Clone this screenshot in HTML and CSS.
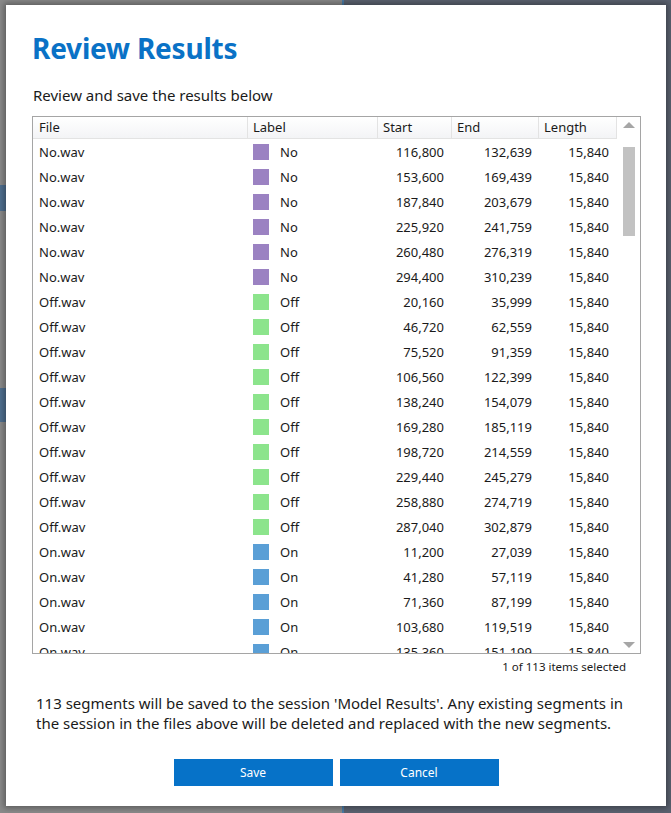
FILE: index.html
```html
<!DOCTYPE html>
<html>
<head>
<meta charset="utf-8">
<link rel="stylesheet" href="styles.css">
</head>
<body>
<div class="dialog">
  <h1 class="title">Review Results</h1>
  <p class="subtitle">Review and save the results below</p>
  <div class="grid-box">
    <div class="grid-main">
      <div class="row head">
        <div class="c c-file">File</div>
        <div class="c c-label">Label</div>
        <div class="c c-start">Start</div>
        <div class="c c-end">End</div>
        <div class="c c-len">Length</div>
      </div>
      <div class="body">
        <div class="row"><div class="c c-file">No.wav</div><div class="c c-label"><span class="sw no"></span>No</div><div class="c num c-start">116,800</div><div class="c num c-end">132,639</div><div class="c num c-len">15,840</div></div>
        <div class="row"><div class="c c-file">No.wav</div><div class="c c-label"><span class="sw no"></span>No</div><div class="c num c-start">153,600</div><div class="c num c-end">169,439</div><div class="c num c-len">15,840</div></div>
        <div class="row"><div class="c c-file">No.wav</div><div class="c c-label"><span class="sw no"></span>No</div><div class="c num c-start">187,840</div><div class="c num c-end">203,679</div><div class="c num c-len">15,840</div></div>
        <div class="row"><div class="c c-file">No.wav</div><div class="c c-label"><span class="sw no"></span>No</div><div class="c num c-start">225,920</div><div class="c num c-end">241,759</div><div class="c num c-len">15,840</div></div>
        <div class="row"><div class="c c-file">No.wav</div><div class="c c-label"><span class="sw no"></span>No</div><div class="c num c-start">260,480</div><div class="c num c-end">276,319</div><div class="c num c-len">15,840</div></div>
        <div class="row"><div class="c c-file">No.wav</div><div class="c c-label"><span class="sw no"></span>No</div><div class="c num c-start">294,400</div><div class="c num c-end">310,239</div><div class="c num c-len">15,840</div></div>
        <div class="row"><div class="c c-file">Off.wav</div><div class="c c-label"><span class="sw off"></span>Off</div><div class="c num c-start">20,160</div><div class="c num c-end">35,999</div><div class="c num c-len">15,840</div></div>
        <div class="row"><div class="c c-file">Off.wav</div><div class="c c-label"><span class="sw off"></span>Off</div><div class="c num c-start">46,720</div><div class="c num c-end">62,559</div><div class="c num c-len">15,840</div></div>
        <div class="row"><div class="c c-file">Off.wav</div><div class="c c-label"><span class="sw off"></span>Off</div><div class="c num c-start">75,520</div><div class="c num c-end">91,359</div><div class="c num c-len">15,840</div></div>
        <div class="row"><div class="c c-file">Off.wav</div><div class="c c-label"><span class="sw off"></span>Off</div><div class="c num c-start">106,560</div><div class="c num c-end">122,399</div><div class="c num c-len">15,840</div></div>
        <div class="row"><div class="c c-file">Off.wav</div><div class="c c-label"><span class="sw off"></span>Off</div><div class="c num c-start">138,240</div><div class="c num c-end">154,079</div><div class="c num c-len">15,840</div></div>
        <div class="row"><div class="c c-file">Off.wav</div><div class="c c-label"><span class="sw off"></span>Off</div><div class="c num c-start">169,280</div><div class="c num c-end">185,119</div><div class="c num c-len">15,840</div></div>
        <div class="row"><div class="c c-file">Off.wav</div><div class="c c-label"><span class="sw off"></span>Off</div><div class="c num c-start">198,720</div><div class="c num c-end">214,559</div><div class="c num c-len">15,840</div></div>
        <div class="row"><div class="c c-file">Off.wav</div><div class="c c-label"><span class="sw off"></span>Off</div><div class="c num c-start">229,440</div><div class="c num c-end">245,279</div><div class="c num c-len">15,840</div></div>
        <div class="row"><div class="c c-file">Off.wav</div><div class="c c-label"><span class="sw off"></span>Off</div><div class="c num c-start">258,880</div><div class="c num c-end">274,719</div><div class="c num c-len">15,840</div></div>
        <div class="row"><div class="c c-file">Off.wav</div><div class="c c-label"><span class="sw off"></span>Off</div><div class="c num c-start">287,040</div><div class="c num c-end">302,879</div><div class="c num c-len">15,840</div></div>
        <div class="row"><div class="c c-file">On.wav</div><div class="c c-label"><span class="sw on"></span>On</div><div class="c num c-start">11,200</div><div class="c num c-end">27,039</div><div class="c num c-len">15,840</div></div>
        <div class="row"><div class="c c-file">On.wav</div><div class="c c-label"><span class="sw on"></span>On</div><div class="c num c-start">41,280</div><div class="c num c-end">57,119</div><div class="c num c-len">15,840</div></div>
        <div class="row"><div class="c c-file">On.wav</div><div class="c c-label"><span class="sw on"></span>On</div><div class="c num c-start">71,360</div><div class="c num c-end">87,199</div><div class="c num c-len">15,840</div></div>
        <div class="row"><div class="c c-file">On.wav</div><div class="c c-label"><span class="sw on"></span>On</div><div class="c num c-start">103,680</div><div class="c num c-end">119,519</div><div class="c num c-len">15,840</div></div>
        <div class="row"><div class="c c-file">On.wav</div><div class="c c-label"><span class="sw on"></span>On</div><div class="c num c-start">135,360</div><div class="c num c-end">151,199</div><div class="c num c-len">15,840</div></div>
      </div>
    </div>
    <div class="scrollbar">
      <div class="arrow up"></div>
      <div class="track"><div class="thumb"></div></div>
      <div class="arrow down"></div>
    </div>
  </div>
  <div class="status">1 of 113 items selected</div>
  <p class="note">113 segments will be saved to the session 'Model Results'. Any existing segments in the session in the files above will be deleted and replaced with the new segments.</p>
  <div class="buttons">
    <button class="btn">Save</button>
    <button class="btn">Cancel</button>
  </div>
</div>
</body>
</html>
```

FILE: styles.css
```css
html, body {
  margin: 0;
  height: 100%;
}
body {
  width: 671px;
  height: 813px;
  box-sizing: border-box;
  padding: 5px 5px 7px 6px;
  overflow: hidden;
  font-family: "Noto Sans", "Open Sans", sans-serif;
  color: #1a1a1a;
  background:
    linear-gradient(#4f6f8f, #4f6f8f) 0 185px / 6px 26px no-repeat,
    linear-gradient(#4f6f8f, #4f6f8f) 0 388px / 6px 34px no-repeat,
    linear-gradient(#4a7aa5, #4a7aa5) 342px 0 / 2px 813px no-repeat,
    linear-gradient(to right, #8a8a8a 0, #8a8a8a 342px, #5b6270 344px, #5b6270 100%);
}
.dialog {
  width: 660px;
  height: 801px;
  box-sizing: border-box;
  background: #fff;
  box-shadow: 0 0 6px 2px rgba(0,0,0,0.35);
  padding: 26px 25px 0 26px;
  display: flex;
  flex-direction: column;
}
.title {
  margin: 0;
  font-size: 28px;
  line-height: 34px;
  font-weight: 700;
  color: #0a72c6;
  letter-spacing: -0.2px;
}
.subtitle {
  margin: 20px 0 0 1px;
  font-size: 15px;
  line-height: 20px;
  color: #1a1a1a;
}
.grid-box {
  margin-top: 11px;
  width: 609px;
  height: 538px;
  box-sizing: border-box;
  border: 1px solid #a5a5a5;
  display: flex;
  overflow: hidden;
}
.grid-main {
  width: 584px;
  display: flex;
  flex-direction: column;
  overflow: hidden;
}
.row {
  display: grid;
  grid-template-columns: 215px 130px 74px 87px 78px;
  height: 25px;
  align-items: center;
  font-size: 13px;
}
.row.head {
  height: 21px;
  flex: none;
  background: linear-gradient(#ffffff, #f3f4f6);
  border-bottom: 1px solid #e3e3e3;
}
.head .c {
  height: 21px;
  line-height: 21px;
  padding-left: 6px;
  box-sizing: border-box;
  border-right: 1px solid #e3e3e3;
}
.head .c-label, .head .c-start, .head .c-end, .head .c-len { padding-left: 5px; }
.body {
  flex: 1;
  overflow: hidden;
}
.c {
  white-space: nowrap;
  overflow: hidden;
}
.c-file { padding-left: 6px; }
.c-label {
  padding-left: 5px;
  display: flex;
  align-items: center;
}
.num { text-align: right; }
.c-start { padding-right: 8px; }
.c-end { padding-right: 7px; }
.c-len { padding-right: 8px; }
.sw {
  width: 16px;
  height: 16px;
  margin-right: 11px;
  flex: none;
}
.sw.no { background: #9b82c2; }
.sw.off { background: #8ce48c; }
.sw.on { background: #5a9fd6; }
.scrollbar {
  width: 23px;
  display: flex;
  flex-direction: column;
  align-items: center;
}
.arrow {
  width: 0;
  height: 0;
  border-left: 6px solid transparent;
  border-right: 6px solid transparent;
}
.arrow.up {
  margin-top: 5px;
  border-bottom: 6px solid #a6a6a6;
}
.arrow.down {
  margin-bottom: 5px;
  border-top: 6px solid #a6a6a6;
}
.track {
  flex: 1;
  width: 12px;
  padding-top: 19px;
}
.thumb {
  width: 12px;
  height: 89px;
  background: #c2c2c2;
}
.status {
  width: 594px;
  text-align: right;
  font-size: 11.5px;
  line-height: 16px;
  margin-top: 5px;
  color: #1a1a1a;
}
.note {
  width: 600px;
  margin: 18px 0 0 4px;
  font-size: 15px;
  line-height: 20px;
  color: #1a1a1a;
}
.buttons {
  margin-top: 26px;
  display: flex;
  justify-content: center;
  gap: 7px;
  padding-right: 1px;
}
.btn {
  width: 159px;
  height: 27px;
  border: none;
  background: #0672c8;
  color: #fff;
  font-family: "Noto Sans", "Open Sans", sans-serif;
  font-size: 12px;
  padding: 0;
}
```
